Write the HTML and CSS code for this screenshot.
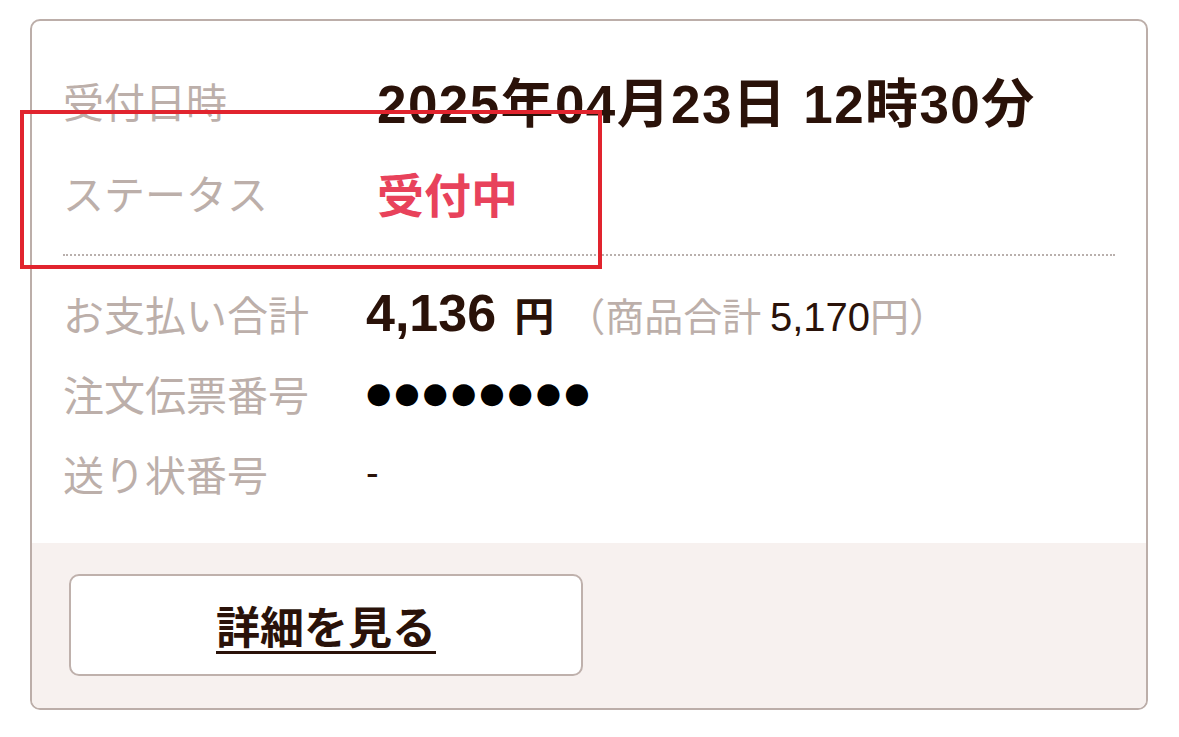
FILE: index.html
```html
<!DOCTYPE html>
<html lang="ja">
<head>
    <meta charset="UTF-8">
    <meta name="viewport" content="width=device-width, initial-scale=1.0">
    <title>注文履歴</title>
    <link rel="stylesheet" href="styles.css">
</head>
<body>
    <div class="page">
        <div class="order-card">
            <div class="order-main">
                <dl class="info-list info-top">
                    <div class="info-row">
                        <dt>受付日時</dt>
                        <dd class="value-date">2025年04月23日 12時30分</dd>
                    </div>
                    <div class="info-row">
                        <dt>ステータス</dt>
                        <dd class="value-status">受付中</dd>
                    </div>
                </dl>
                <dl class="info-list info-bottom">
                    <div class="info-row">
                        <dt>お支払い合計</dt>
                        <dd>
                            <span class="price">4,136</span><span class="yen">円</span><span class="subtotal">（商品合計 <span class="subtotal-num">5,170</span>円）</span>
                        </dd>
                    </div>
                    <div class="info-row">
                        <dt>注文伝票番号</dt>
                        <dd class="value-masked">●●●●●●●●</dd>
                    </div>
                    <div class="info-row">
                        <dt>送り状番号</dt>
                        <dd class="value-plain">-</dd>
                    </div>
                </dl>
            </div>
            <div class="order-footer">
                <a class="detail-btn" href="#">詳細を見る</a>
            </div>
        </div>

        <!-- annotation box over the status row -->
        <div class="highlight-box"></div>
    </div>
</body>
</html>
```

FILE: styles.css
```css
body {
    margin: 0;
    padding: 0;
    background-color: #fff;
    font-family: "Liberation Sans", "Noto Sans CJK JP", sans-serif;
    color: #2a1209;
}

.page {
    position: relative;
    padding: 19px 31px 26px 30px;
}

.order-card {
    border: 2px solid #bcaea9;
    border-radius: 10px;
    overflow: hidden;
}

.order-main {
    padding: 33px 31px 30px;
}

.info-list {
    margin: 0;
}

.info-row {
    display: flex;
    align-items: center;
}

.info-row dt {
    flex: 0 0 auto;
    font-family: "Noto Sans CJK JP", sans-serif;
    font-size: 41px;
    color: #bcafaa;
    white-space: nowrap;
}

.info-row dd {
    margin: 0;
    white-space: nowrap;
}

.info-top {
    padding-bottom: 16px;
    border-bottom: 2px dotted #b9b0ad;
}

.info-top .info-row {
    height: 92px;
}

.info-top dt {
    width: 314px;
}

.info-bottom {
    padding-top: 17px;
}

.info-bottom .info-row {
    height: 80px;
}

.info-bottom dt {
    width: 303px;
}

.value-date {
    font-size: 53px;
    font-weight: bold;
    letter-spacing: 1.4px;
    margin-top: -8px;
}

.value-status {
    font-family: "Noto Sans CJK JP", sans-serif;
    font-size: 47px;
    font-weight: bold;
    color: #e8425b;
}

.price {
    font-size: 52px;
    font-weight: bold;
}

.yen {
    font-family: "Noto Sans CJK JP", sans-serif;
    font-size: 40px;
    font-weight: bold;
    margin-left: 18px;
}

.subtotal {
    font-family: "Noto Sans CJK JP", sans-serif;
    font-size: 39px;
    color: #bcafaa;
    margin-left: 12px;
}

.subtotal-num {
    font-family: "Liberation Sans", sans-serif;
    font-size: 40px;
    color: #2a1209;
}

.value-masked {
    font-family: "DejaVu Sans", sans-serif;
    font-size: 29px;
    letter-spacing: 3px;
    color: #000;
}

.value-plain {
    font-size: 38px;
}

.order-footer {
    background-color: #f7f1ef;
    padding: 31px 37px 32px;
}

.detail-btn {
    display: flex;
    justify-content: center;
    align-items: center;
    width: 510px;
    height: 98px;
    background-color: #fff;
    border: 2px solid #bfb1ac;
    border-radius: 10px;
    font-family: "Noto Sans CJK JP", sans-serif;
    font-size: 44px;
    font-weight: bold;
    color: #2a1209;
    text-decoration: underline;
    text-decoration-thickness: 3px;
    text-underline-offset: 7px;
}

.highlight-box {
    position: absolute;
    left: 20px;
    top: 110px;
    width: 574px;
    height: 151px;
    border: 4px solid #e1242e;
}
```
